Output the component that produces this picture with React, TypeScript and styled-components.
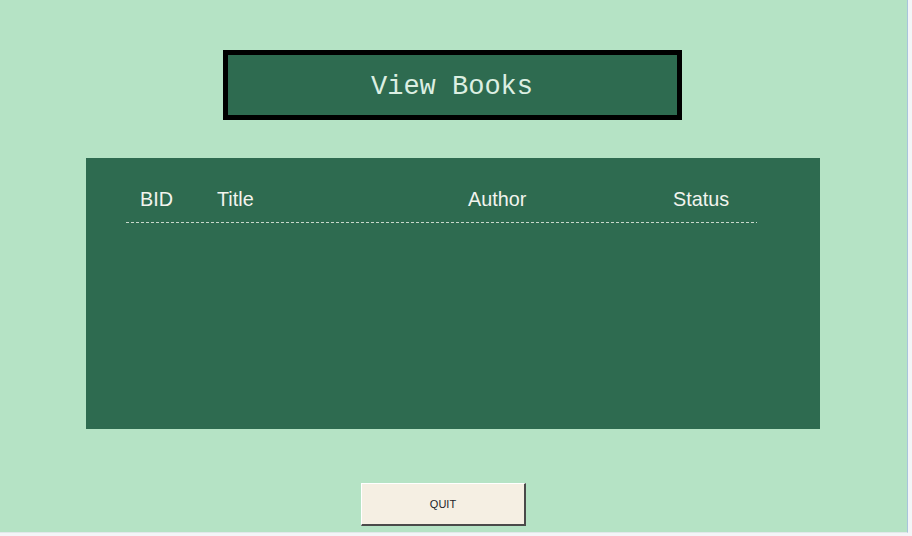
import styled, { createGlobalStyle } from 'styled-components';

const GlobalStyle = createGlobalStyle`
   html, body {
      margin: 0;
      padding: 0;
      background: #f3f5f7;
   }
`;

const Window = styled.div`
   width: 908px;
   height: 533px;
   border-right: 1px solid #a8c4dc;
   border-bottom: 1px solid #e2e8ea;
   background: #b5e3c5;
   display: flex;
   flex-direction: column;
   align-items: flex-start;
   padding-top: 50px;
   box-sizing: border-box;
   font-family: 'Liberation Sans', Arial, sans-serif;
`;

const HeadingFrame = styled.div`
   margin-left: 223px;
   width: 459px;
   height: 70px;
   box-sizing: border-box;
   border: 5px solid #000;
   background: #2e6b50;
   display: flex;
   align-items: center;
   justify-content: center;
`;

const HeadingText = styled.span`
   font-family: 'Liberation Mono', 'Courier New', monospace;
   font-size: 27px;
   font-weight: 300;
   color: #dcefe2;
   margin: 4px 0 0 -1px;
`;

const Panel = styled.div`
   margin-top: 38px;
   margin-left: 86px;
   width: 734px;
   height: 271px;
   background: #2e6b50;
   padding: 30px 0 0 40px;
   box-sizing: border-box;
`;

const HeaderRow = styled.div`
   display: grid;
   grid-template-columns: 14px 77px 251px 205px 1fr;
   width: 631px;
   font-size: 19.8px;
   line-height: 22px;
   color: #f2f4ee;
`;

const Divider = styled.div`
   margin-top: 12px;
   width: 631px;
   height: 1px;
   background: repeating-linear-gradient(
      to right,
      #c9d8cc 0 3px,
      transparent 3px 5px
   );
`;

const QuitButton = styled.button`
   margin-top: 54px;
   margin-left: 361px;
   width: 165px;
   height: 43px;
   box-sizing: border-box;
   background: #f5efe3;
   border: none;
   border-top: 1px solid #ffffff;
   border-left: 1px solid #ffffff;
   border-right: 2px solid #4a4a4a;
   border-bottom: 2px solid #4a4a4a;
   font-family: 'Liberation Sans', Arial, sans-serif;
   font-size: 11px;
   color: #1e1e2a;
   padding: 0;
   cursor: pointer;
`;

const columns = ['BID', 'Title', 'Author', 'Status'];

export default function App() {
   return (
      <>
         <GlobalStyle />
         <Window>
            <HeadingFrame>
               <HeadingText>View Books</HeadingText>
            </HeadingFrame>
            <Panel>
               <HeaderRow>
                  <span />
                  {columns.map((c) => (
                     <span key={c}>{c}</span>
                  ))}
               </HeaderRow>
               <Divider />
            </Panel>
            <QuitButton>QUIT</QuitButton>
         </Window>
      </>
   );
}
